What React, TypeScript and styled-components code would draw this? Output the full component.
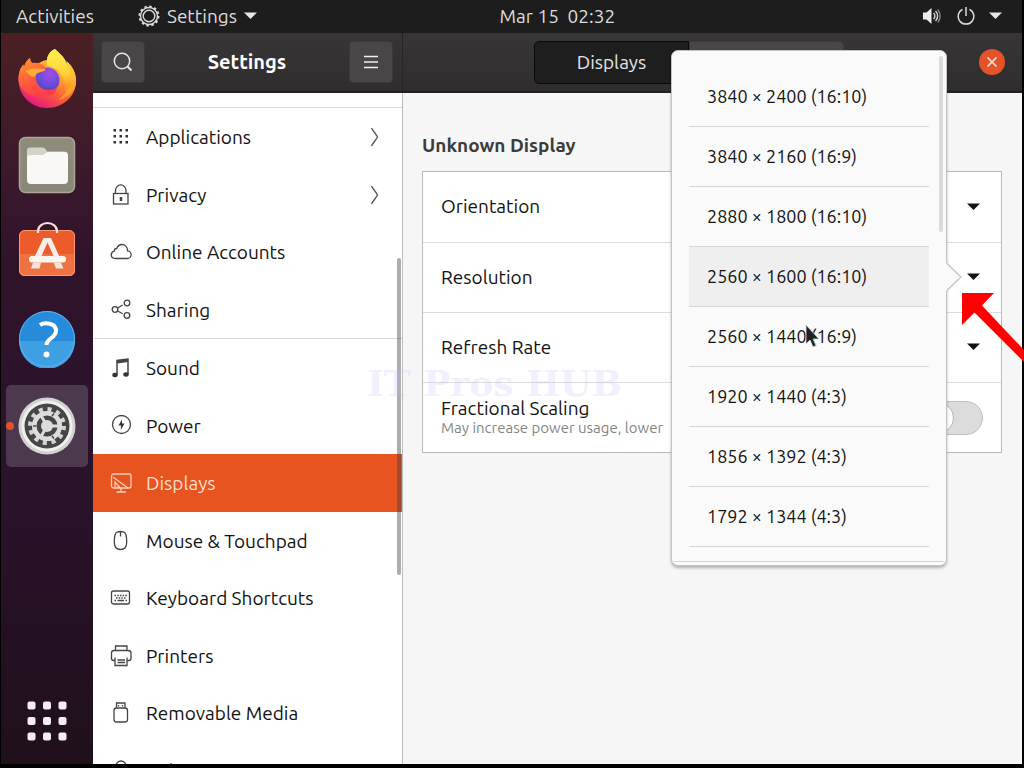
import React from "react";
import styled, { createGlobalStyle, css } from "styled-components";

const GlobalStyle = createGlobalStyle`
  *, *::before, *::after { box-sizing: border-box; }
  body {
    margin: 0;
    background: #000;
    font-family: Ubuntu, "Noto Sans", "Open Sans", sans-serif;
    font-size: 19px;
    line-height: 24px;
    color: #121212;
  }
  button { font: inherit; color: inherit; border: 0; padding: 0; background: none; cursor: default; }
  svg { display: block; flex: none; }
`;

const Desktop = styled.div`
  position: relative;
  display: flex;
  flex-direction: column;
  height: 100vh;
  padding: 0 2px 4px 1px;
  overflow: hidden;
  background: #000;
`;

/* ---------- top bar ---------- */

const TopBar = styled.header`
  display: grid;
  grid-template-columns: 5fr auto 4fr;
  align-items: center;
  flex: none;
  height: 33px;
  padding: 0 20px 2px 15px;
  background: #1d1d1d;
  color: #dcdcdc;
`;

const TopGroup = styled.div<{ $end?: boolean }>`
  display: flex;
  align-items: center;
  gap: ${(p) => (p.$end ? 14 : 44)}px;
  justify-content: ${(p) => (p.$end ? "flex-end" : "flex-start")};
`;

const TopButton = styled.button`
  display: flex;
  align-items: center;
  gap: 7px;
  white-space: pre;
`;

/* ---------- dock ---------- */

const Workspace = styled.div`
  display: flex;
  flex: 1;
  min-height: 0;
`;

const Dock = styled.nav`
  display: flex;
  flex-direction: column;
  align-items: center;
  gap: 5px;
  flex: none;
  width: 92px;
  padding: 4px 0 2px;
  background: linear-gradient(#4c2023 0, #3e1a2b 120px, #2f132b 230px, #29122a 480px, #241022 600px, #20101b 100%);
`;

const DockTile = styled.button<{ $active?: boolean; $last?: boolean }>`
  position: relative;
  display: flex;
  align-items: center;
  justify-content: center;
  flex: none;
  width: 82px;
  height: 82px;
  border-radius: 5px;
  background: ${(p) => (p.$active ? "#4c394e" : "none")};
  ${(p) => p.$last && css`margin-top: auto;`}
`;

const RunningDot = styled.span`
  position: absolute;
  left: 0;
  top: 37px;
  width: 8px;
  height: 8px;
  border-radius: 50%;
  background: #e2522a;
`;

/* ---------- window ---------- */

const Window = styled.div`
  display: flex;
  flex-direction: column;
  flex: 1;
  min-width: 0;
`;

const TitleBar = styled.div`
  display: flex;
  flex: none;
  height: 60px;
  background: linear-gradient(#383536, #302d2e);
  border-bottom: 2px solid #232122;
`;

const SideTitle = styled.div`
  display: flex;
  align-items: center;
  justify-content: space-between;
  flex: none;
  width: 310px;
  padding: 0 9px 0 8px;
  border-right: 1px solid #272526;
`;

const WindowTitle = styled.h1`
  margin: 0;
  font-size: 20px;
  font-weight: 700;
  color: #fff;
`;

const HeaderButton = styled.button`
  display: flex;
  align-items: center;
  justify-content: center;
  width: 44px;
  height: 42px;
  border: 1px solid #3c3a3b;
  border-radius: 4px;
  background: #484647;
`;

const MainTitle = styled.div`
  display: flex;
  align-items: center;
  flex: 1;
  padding-right: 17px;
`;

const Tabs = styled.div`
  display: flex;
  flex: 1;
  justify-content: center;
`;

const Tab = styled.button<{ $active?: boolean }>`
  width: 155px;
  height: 43px;
  color: #e4e4e4;
  border: 1px solid ${(p) => (p.$active ? "#090909" : "#3c3a3b")};
  border-radius: ${(p) => (p.$active ? "5px 0 0 5px" : "0 5px 5px 0")};
  background: ${(p) => (p.$active ? "#1e1e1e" : "#484647")};
`;

const CloseButton = styled.button`
  display: flex;
  align-items: center;
  justify-content: center;
  width: 26px;
  height: 26px;
  margin-left: 4px;
  border-radius: 50%;
  background: #e4532a;
`;

const Body = styled.div`
  display: flex;
  flex: 1;
  min-height: 0;
`;

const Sidebar = styled.aside`
  position: relative;
  flex: none;
  width: 310px;
  padding-top: 14px;
  overflow: hidden;
  background: #fff;
  border-right: 1px solid #bdbdbd;
`;

const NavGroup = styled.ul`
  margin: 0;
  padding: 0;
  list-style: none;
  border-top: 1px solid #dadada;
`;

const NavItem = styled.li`
  display: flex;
  height: 57px;
  &:nth-child(odd) { height: 58px; }
`;

const NavButton = styled.button<{ $active?: boolean }>`
  display: flex;
  align-items: center;
  gap: 14px;
  flex: 1;
  padding: 0 21px 0 17px;
  text-align: left;
  color: ${(p) => (p.$active ? "#ffdccb" : "#121212")};
  background: ${(p) => (p.$active ? "#e8541f" : "#fff")};
`;

const NavLabel = styled.span`
  flex: 1;
`;

const ScrollThumb = styled.span`
  position: absolute;
  right: 1px;
  top: 165px;
  width: 4px;
  height: 317px;
  border-radius: 2px;
  background: rgba(60, 60, 60, 0.42);
`;

const Main = styled.main`
  flex: 1;
  min-width: 0;
  padding: 40px 20px 0 19px;
  background: #f6f6f6;
`;

const SectionTitle = styled.h2`
  margin: 0 0 14px;
  font-size: 19px;
  line-height: 24px;
  font-weight: 700;
  color: #3c3c3c;
`;

const Card = styled.div`
  border: 1px solid #bababa;
  background: #fff;
`;

const SettingRow = styled.div`
  position: relative;
  display: flex;
  align-items: center;
  justify-content: space-between;
  height: 70px;
  padding: 0 18px;
  & + & { border-top: 1px solid #dcdcdc; }
`;

const RowButton = styled.button`
  display: flex;
  align-items: center;
  justify-content: space-between;
  flex: 1;
  height: 100%;
  padding: 0 3px 2px 0;
`;

const SwitchLabel = styled.label`
  display: flex;
  flex-direction: column;
  padding-bottom: 2px;
  line-height: 21px;
`;

const Hint = styled.small`
  font-size: 15px;
  line-height: 17px;
  color: #858585;
`;

const Switch = styled.input`
  appearance: none;
  width: 62px;
  height: 34px;
  margin: 0;
  border: 1px solid #bfbfbf;
  border-radius: 17px;
  background: #dcdcdc;
  &::before {
    content: "";
    display: block;
    width: 32px;
    height: 32px;
    border: 1px solid #b5b5b5;
    border-radius: 50%;
    background: #fff;
  }
`;

/* ---------- resolution popover ---------- */

const Popover = styled.div`
  position: absolute;
  z-index: 2;
  top: -193px;
  right: 54px;
  width: 276px;
  height: 516px;
  padding: 16px 17px 0;
  border: 1px solid #c4c4c4;
  border-radius: 7px;
  background: #fafafa;
  box-shadow: 0 2px 3px rgba(0, 0, 0, 0.28);
  font-size: 18px;
`;

const Options = styled.ul`
  margin: 0;
  padding: 0;
  list-style: none;
`;

const Option = styled.li<{ $selected?: boolean }>`
  display: flex;
  height: 60px;
  border-bottom: 1px solid #d6d6d6;
  background: ${(p) => (p.$selected ? "#efefef" : "none")};
`;

const OptionButton = styled.button`
  flex: 1;
  padding: 0 0 2px 18px;
  text-align: left;
`;

const PopoverEdge = styled.span`
  position: absolute;
  left: 2px;
  right: 2px;
  bottom: 3px;
  height: 1px;
  background: #d4d4d4;
`;

const PopoverThumb = styled.span`
  position: absolute;
  top: 5px;
  right: 3px;
  width: 4px;
  height: 176px;
  border-radius: 2px;
  background: #dadada;
`;

const PopoverTail = styled.svg`
  position: absolute;
  top: 211px;
  right: -16px;
`;

const Pointer = styled.svg`
  position: absolute;
  left: 133px;
  top: 273px;
`;

const Annotation = styled.svg`
  position: absolute;
  z-index: 4;
  right: 0;
  top: 293px;
`;

const Watermark = styled.span`
  position: absolute;
  z-index: 1;
  left: 367px;
  top: 370px;
  font-family: "DejaVu Serif", serif;
  font-size: 36px;
  font-weight: 700;
  line-height: 27px;
  white-space: pre;
  color: rgba(190, 190, 255, 0.24);
  pointer-events: none;
`;

/* ---------- drawings ---------- */

const Caret = ({ color = "#111" }: { color?: string }) => (
  <svg width="13" height="7" viewBox="0 0 13 7" aria-hidden="true">
    <path d="M0 0.5h13L6.5 7z" fill={color} />
  </svg>
);

const Chevron = () => (
  <svg width="12" height="20" viewBox="0 0 12 20" fill="none" stroke="#555" strokeWidth="1.3" aria-hidden="true">
    <path d="M2.500 1C4 4 7 7 8.500 10C7 13 4 16 2.500 19" />
  </svg>
);

const TopGear = () => (
  <svg width="22" height="22" viewBox="0 0 22 22" fill="none" stroke="#dcdcdc" aria-hidden="true">
    <circle cx="11" cy="11" r="8.500" strokeWidth="1.400" />
    <circle cx="11" cy="11" r="9.600" strokeWidth="1.800" strokeDasharray="2.500 2.526" />
    <circle cx="11" cy="11" r="5.800" strokeWidth="1.400" />
  </svg>
);

const Firefox = () => (
  <svg width="60" height="60" viewBox="0 0 60 60" aria-hidden="true">
    <defs>
      <linearGradient id="ffBody" x1="0.800" y1="0.100" x2="0.300" y2="1">
        <stop offset="0" stopColor="#ffe14a" />
        <stop offset="0.350" stopColor="#ffa52e" />
        <stop offset="0.650" stopColor="#fb5a38" />
        <stop offset="1" stopColor="#e31587" />
      </linearGradient>
      <linearGradient id="ffFlame" x1="0.500" y1="0" x2="0.600" y2="1">
        <stop offset="0" stopColor="#fff04f" />
        <stop offset="0.450" stopColor="#ffd43a" />
        <stop offset="0.750" stopColor="#ff8a28" />
        <stop offset="1" stopColor="#fb4a3c" />
      </linearGradient>
      <linearGradient id="ffHead" x1="0" y1="0" x2="0.500" y2="1">
        <stop offset="0" stopColor="#ff9b2a" />
        <stop offset="0.600" stopColor="#ff5a3c" />
        <stop offset="1" stopColor="#ff3d4c" />
      </linearGradient>
      <radialGradient id="ffGlobe" cx="0.600" cy="0.250" r="0.850">
        <stop offset="0" stopColor="#a24be8" />
        <stop offset="0.550" stopColor="#6a4bd8" />
        <stop offset="1" stopColor="#3f3fae" />
      </radialGradient>
    </defs>
    <path d="M38 1c3 3 8 7 10 11 1 2 2 4 2 5 0-2 0-3-1-4 7 5 10 13 10 20 0 15-13 27-29 27S1.500 47 1.500 32c0-6 1.500-12 5-15.500 0 0 0 1.500.5 2.500 1-4 3-7 6-9 0 2 1 4 2 5h7c3-2 6-3 8-3C30 7 34 3 38 1z" fill="url(#ffBody)" />
    <path d="M38 1c3 3 8 7 10 11 1 2 2 4 2 5 0-2 0-3-1-4 7 5 10 13 10 20 0 12-8 21-19 22 6-4 9-10 8-18-1-8-5-14-11-17-3-1.500-5-2-7-3C29 8 33 3 38 1z" fill="url(#ffFlame)" />
    <circle cx="30" cy="32" r="12.500" fill="url(#ffGlobe)" />
    <path d="M1.500 32c0-6 1.500-12 5-15.500 0 0 0 1.500.5 2.500 1-4 3-7 6-9 0 2 1 4 2 5 4-.500 8 0 11 2 2 1.500 3 3 3 4-1 1-4 1-7 2-3 1-3 3-3 5-1 7 4 13 11 14 4 .500 8-1 10-3-1 7-7 10-14 10C14 49 3 43 1.500 32z" fill="url(#ffHead)" />
    <path d="M8 23c5-3 13-3 19-2 1 0 1.500 1 1 1.500-2 1.500-5 1-8 3-2 1.500-2 3.500-4 3.500-3-1-5-4-8-6z" fill="#ffae2f" />
    <path d="M48 14c7 8 8 19 3 27-2 4-6 8-10 11 11-2 18-10 18-20 0-7-4-14-11-18z" fill="#ffb92d" fillOpacity="0.600" />
  </svg>
);

const Files = () => (
  <svg width="58" height="58" viewBox="0 0 58 58" aria-hidden="true">
    <defs>
      <linearGradient id="filesBg" x1="0" y1="0" x2="0" y2="1">
        <stop offset="0" stopColor="#8f8b7d" />
        <stop offset="1" stopColor="#8a8678" />
      </linearGradient>
    </defs>
    <rect x="1.500" y="1.500" width="55" height="55" rx="6" fill="url(#filesBg)" stroke="#aaa698" strokeWidth="1.500" />
    <path d="M9 14.500q0-3 3-3h13q1.500 0 2.500 1.500l1.500 2.500h17q3 0 3 3V30H9z" fill="#d5d2c8" />
    <path d="M9 22q0-3 3-3h12q2 0 3-1.500t3-1.500h17q3 0 3 3v25q0 4-4 4H13q-4 0-4-4z" fill="#f9f8f6" />
  </svg>
);

const Software = () => (
  <svg width="58" height="68" viewBox="0 0 58 68" aria-hidden="true">
    <rect x="1" y="12" width="56" height="46" rx="6" fill="#ee5b2a" />
    <path d="M1 36h56v16q0 6-6 6H7q-6 0-6-6z" fill="#ef7242" />
    <rect x="1.500" y="12.500" width="55" height="45" rx="5.500" fill="none" stroke="#fa9a70" />
    <path d="M20 15v-2a9.500 8 0 0 1 19 0v2" fill="none" stroke="#f2e3d8" strokeWidth="2.200" />
    <path d="M25.500 20h7.500L41.500 39H36L29.500 24.500 23 39h-6.500z" fill="#f7eee8" />
    <rect x="11" y="38" width="37" height="6.500" rx="3" fill="#fbf5f0" />
    <path d="M15 44.500h8l-1.500 6H13zM35.500 44.500h7.500l2.500 6h-7.500z" fill="#f3e5dc" />
  </svg>
);

const Help = () => (
  <svg width="58" height="58" viewBox="0 0 58 58" aria-hidden="true">
    <circle cx="29" cy="29" r="28" fill="#258bda" />
    <path d="M1 31a28 28 0 0 0 56 0z" fill="#3e9fe3" />
    <circle cx="29" cy="29" r="27.500" fill="none" stroke="#62b4ec" />
    <path d="M22 15c4-2.500 16-3 16 6 0 7-9.500 7-9.500 14" fill="none" stroke="#fff" strokeWidth="4" />
    <circle cx="28.500" cy="44.500" r="3" fill="#fff" />
  </svg>
);

const GearApp = () => (
  <svg width="58" height="58" viewBox="0 0 58 58" aria-hidden="true">
    <circle cx="29" cy="29" r="28.500" fill="#d2d2d2" />
    <circle cx="29" cy="29" r="25.500" fill="#f0f0f0" />
    <circle cx="29" cy="29" r="22.500" fill="#464646" />
    <circle cx="29" cy="29" r="16.500" fill="none" stroke="#d4d4d4" strokeWidth="5" strokeDasharray="4 4.640" />
    <circle cx="29" cy="29" r="12.800" fill="none" stroke="#dcdcdc" strokeWidth="4.500" />
    <path d="M29 29h13M29 29l-6.500-11.500M29 29l-6.500 11.500" stroke="#dcdcdc" strokeWidth="3" />
    <circle cx="29" cy="29" r="6" fill="#dcdcdc" />
    <path d="M18 29h-3M34 19l2-2.500M34 39l2 2.500" stroke="#464646" strokeWidth="1.500" />
  </svg>
);

const AppGrid = () => (
  <svg width="40" height="40" viewBox="0 0 40 40" fill="#f4eef4" aria-hidden="true">
    {[0, 15.5, 31].map((y) => [0, 15.5, 31].map((x) => (
      <rect key={`${x}-${y}`} x={x + 0.5} y={y + 0.5} width="8" height="8" rx="2" />
    )))}
  </svg>
);

const navShapes: Record<string, React.ReactNode> = {
  Applications: (
    <g fill="#333" stroke="none">
      {[4, 10, 16].map((y) => [5, 11, 17].map((x) => <rect key={`${x}-${y}`} x={x - 1.5} y={y - 1} width="2.5" height="2.5" />))}
    </g>
  ),
  Privacy: (
    <>
      <rect x="3.500" y="9.500" width="14.500" height="10.500" />
      <path d="M5.500 9.500V6.500a5.200 5.500 0 0 1 10.500 0v3" />
      <path d="M11 13v4" strokeWidth="2.500" />
    </>
  ),
  "Online Accounts": <path d="M5.500 17.500h11.500a3.800 3.800 0 0 0 .600-7.600C17.500 6 15 3.500 12 3.500c-3 0-4.500 2-5.300 4C4 7.500 4.500 9.500 4.500 9.900 0.500 11-.500 17 5.500 17.500z" />,
  Sharing: (
    <>
      <circle cx="5" cy="10.500" r="2.800" />
      <circle cx="17" cy="4" r="2.800" />
      <circle cx="17" cy="16.500" r="2.800" />
      <path d="M7.700 9l5-3M7.700 12l5 2.800" />
    </>
  ),
  Sound: (
    <>
      <path d="M7 18V3.500l11-1.500v15" strokeWidth="1.500" />
      <path d="M7 5l11-1.500" strokeWidth="3" />
      <ellipse cx="5" cy="18" rx="2.700" ry="2.200" fill="#333" stroke="none" />
      <ellipse cx="16" cy="17.500" rx="2.700" ry="2.200" fill="#333" stroke="none" />
    </>
  ),
  Power: (
    <>
      <circle cx="11.500" cy="9.500" r="9" />
      <path d="M12 4.500L8.500 10.500h2.500L10.800 15l3.700-6.500H12z" fill="#333" stroke="none" />
    </>
  ),
  Displays: (
    <>
      <rect x="1.500" y="2" width="19.500" height="14" rx="2" />
      <path d="M3 5l15 11M5 15.500V10l5 5.500zM11 16v4" />
      <path d="M6.500 20h9.500" strokeWidth="1.600" />
    </>
  ),
  "Mouse & Touchpad": <path d="M10.500 1.500C15 1.500 16 3 16.500 8c.500 4 1 11.500-6 11.500S4 12 4.500 8c.500-5 1.500-6.500 6-6.500zM10.500 2v4.500" />,
  "Keyboard Shortcuts": (
    <>
      <rect x="1.500" y="4" width="18" height="13" rx="2" />
      <path d="M4.500 8.500h12.500M6 11h9.500" strokeDasharray="1.500 1.200" strokeWidth="1.300" />
      <path d="M4.500 13.500h1.500M7.500 13.500h6.500M15.500 13.500h1.500" strokeWidth="1.300" />
    </>
  ),
  Printers: (
    <>
      <path d="M5.500 5V1h11.500V5M5 15.500H3.500q-2 0-2-2V8q0-2.500 2.500-2.500h14q3 0 3 2.500v5.500q0 2-2 2H17" />
      <path d="M5 12.500v8h12v-8M7.500 15h7.500M7.500 17.500h7.500" />
    </>
  ),
  "Removable Media": (
    <>
      <rect x="4" y="6" width="13.500" height="14" rx="2.500" />
      <path d="M6.500 5.500V1H15V5.500M8.500 3v1.500M12.500 3v1.500" />
    </>
  ),
  Color: <path d="M6 9V6a5 5 0 0 1 10 0v3M3 9h16v10H3z" />,
};

const NavIcon = ({ name, active }: { name: string; active?: boolean }) => (
  <svg width="22" height="22" viewBox="0 0 22 22" fill="none" stroke={active ? "#ffcdb6" : "#444"} strokeWidth="1.3" aria-hidden="true">
    {navShapes[name]}
  </svg>
);

/* ---------- data ---------- */

const groups = [
  [
    { name: "Applications", more: true },
    { name: "Privacy", more: true },
    { name: "Online Accounts" },
    { name: "Sharing" },
  ],
  [
    { name: "Sound" },
    { name: "Power" },
    { name: "Displays" },
    { name: "Mouse & Touchpad" },
    { name: "Keyboard Shortcuts" },
    { name: "Printers" },
    { name: "Removable Media" },
    { name: "Color" },
  ],
] as { name: string; more?: boolean }[][];

const resolutions = [
  "3840 × 2400 (16:10)",
  "3840 × 2160 (16:9)",
  "2880 × 1800 (16:10)",
  "2560 × 1600 (16:10)",
  "2560 × 1440 (16:9)",
  "1920 × 1440 (4:3)",
  "1856 × 1392 (4:3)",
  "1792 × 1344 (4:3)",
];

const ResolutionPopover = () => (
  <Popover>
    <Options>
      {resolutions.map((r) => (
        <Option key={r} $selected={r.startsWith("2560 × 1600")}>
          <OptionButton>{r}</OptionButton>
        </Option>
      ))}
    </Options>
    <PopoverEdge />
    <PopoverThumb />
    <PopoverTail width="16" height="30" viewBox="0 0 16 30" aria-hidden="true">
      <path d="M0 1L15 15 0 29z" fill="#fafafa" />
      <path d="M1 1.500L15 15 1 28.500" fill="none" stroke="#c4c4c4" strokeWidth="1.300" />
    </PopoverTail>
    <Pointer width="16" height="26" viewBox="0 0 16 26" aria-hidden="true">
      <path d="M1 1v19l4-4 3 7 3-1.500-3-6.500h6z" fill="#222" stroke="#ddd" strokeWidth="0.800" />
    </Pointer>
  </Popover>
);

export default function App() {
  return (
    <>
      <GlobalStyle />
      <Desktop>
        <TopBar>
          <TopGroup>
            <TopButton>Activities</TopButton>
            <TopButton>
              <TopGear />
              Settings
              <Caret color="#e6e6e6" />
            </TopButton>
          </TopGroup>
          <TopButton>{"Mar 15  02:32"}</TopButton>
          <TopGroup $end>
            <TopButton aria-label="Volume">
              <svg width="20" height="18" viewBox="0 0 20 18" fill="none" stroke="#dcdcdc" strokeWidth="1.400" aria-hidden="true">
                <path d="M0 5.500h3.500L8.500 1v16l-5-4.500H0z" fill="#eee" stroke="none" />
                <path d="M10.500 6a4 4 0 0 1 0 6M12.500 4a7 7 0 0 1 0 10" />
                <path d="M14.700 2.500a10 10 0 0 1 0 13" stroke="#888" />
              </svg>
            </TopButton>
            <TopButton aria-label="Power">
              <svg width="18" height="18" viewBox="0 0 18 18" fill="none" stroke="#dcdcdc" strokeWidth="1.500" aria-hidden="true">
                <path d="M5.500 2.300a7.800 7.800 0 1 0 7 0M9 0v9" />
              </svg>
            </TopButton>
            <TopButton aria-label="System menu">
              <Caret color="#e6e6e6" />
            </TopButton>
          </TopGroup>
        </TopBar>

        <Workspace>
          <Dock>
            <DockTile aria-label="Firefox"><Firefox /></DockTile>
            <DockTile aria-label="Files"><Files /></DockTile>
            <DockTile aria-label="Software"><Software /></DockTile>
            <DockTile aria-label="Help"><Help /></DockTile>
            <DockTile aria-label="Settings" $active>
              <GearApp />
              <RunningDot />
            </DockTile>
            <DockTile aria-label="Show Applications" $last><AppGrid /></DockTile>
          </Dock>

          <Window>
            <TitleBar>
              <SideTitle>
                <HeaderButton aria-label="Search">
                  <svg width="20" height="20" viewBox="0 0 20 20" fill="none" stroke="#e6e6e6" strokeWidth="1.500" aria-hidden="true">
                    <circle cx="9" cy="9" r="7.700" />
                    <path d="M14.500 14.500l4 4" strokeWidth="2" />
                  </svg>
                </HeaderButton>
                <WindowTitle>Settings</WindowTitle>
                <HeaderButton aria-label="Menu">
                  <svg width="14" height="14" viewBox="0 0 14 14" stroke="#f0f0f0" strokeWidth="1.500" aria-hidden="true">
                    <path d="M0 1.500h14M0 7h14M0 12.500h14" />
                  </svg>
                </HeaderButton>
              </SideTitle>
              <MainTitle>
                <Tabs>
                  <Tab $active>Displays</Tab>
                  <Tab aria-label="Night Light" />
                </Tabs>
                <CloseButton aria-label="Close">
                  <svg width="12" height="12" viewBox="0 0 12 12" stroke="#fbe3d8" strokeWidth="1.700" aria-hidden="true">
                    <path d="M1.500 1.500l9 9M10.500 1.500l-9 9" />
                  </svg>
                </CloseButton>
              </MainTitle>
            </TitleBar>

            <Body>
              <Sidebar>
                {groups.map((items) => (
                  <NavGroup key={items[0].name}>
                    {items.map(({ name, more }) => (
                      <NavItem key={name}>
                        <NavButton $active={name === "Displays"}>
                          <NavIcon name={name} active={name === "Displays"} />
                          <NavLabel>{name}</NavLabel>
                          {more && <Chevron />}
                        </NavButton>
                      </NavItem>
                    ))}
                  </NavGroup>
                ))}
                <ScrollThumb />
              </Sidebar>

              <Main>
                <SectionTitle>Unknown Display</SectionTitle>
                <Card>
                  <SettingRow>
                    <RowButton aria-haspopup="listbox">Orientation<Caret /></RowButton>
                  </SettingRow>
                  <SettingRow>
                    <RowButton aria-haspopup="listbox" aria-expanded="true">Resolution<Caret /></RowButton>
                    <ResolutionPopover />
                  </SettingRow>
                  <SettingRow>
                    <RowButton aria-haspopup="listbox">Refresh Rate<Caret /></RowButton>
                  </SettingRow>
                  <SettingRow>
                    <SwitchLabel htmlFor="fractional">
                      Fractional Scaling
                      <Hint>May increase power usage, lower</Hint>
                    </SwitchLabel>
                    <Switch id="fractional" type="checkbox" role="switch" />
                  </SettingRow>
                </Card>
              </Main>
            </Body>
          </Window>
        </Workspace>

        <Watermark>IT Pros HUB</Watermark>
        <Annotation width="62" height="70" viewBox="0 0 62 70" aria-hidden="true">
          <path d="M0 0h32L20 12.500 62 57v12L12.500 19.500 0 32z" fill="#f00" />
        </Annotation>
      </Desktop>
    </>
  );
}
